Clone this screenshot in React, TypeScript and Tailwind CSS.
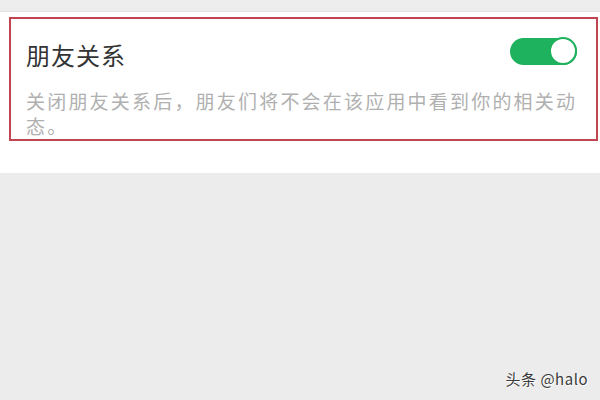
export default function App() {
  return (
    <div
      className="w-[600px] h-[400px] flex flex-col bg-[#ececec] overflow-hidden"
      style={{ fontFamily: '"Noto Sans CJK SC", "Noto Sans", sans-serif' }}
    >
      {/* top band */}
      <div className="h-[12px] bg-[#ededed] border-b border-[#e2e2e2]" />

      {/* settings card */}
      <div className="bg-white pl-[9px] pr-[2px] pt-[5px] pb-[32px]">
        <div className="border-[2px] border-[#c24552] pl-[15px] pr-[19px] pt-[22px] pb-[1px]">
          <div className="flex items-center justify-between">
            <span className="text-[24px] leading-[28px] tracking-[1px] text-[#333]">朋友关系</span>
            <div className="w-[67px] h-[27px] rounded-full bg-[#1fb25e] flex items-center justify-end -mt-[8px]">
              <div className="w-[28px] h-[28px] rounded-full bg-white border-[2px] border-[#1fb25e]" />
            </div>
          </div>
          <p className="mt-[19px] w-[558px] text-[19px] leading-[25px] tracking-[2.2px] text-[#b0b0b0]">
            关闭朋友关系后，朋友们将不会在该应用中看到你的相关动态。
          </p>
        </div>
      </div>

      {/* empty area + watermark */}
      <div className="flex-1 flex items-end justify-end pr-[12px] pb-[10px]">
        <span
          className="text-[15px] tracking-[0.5px] text-[#3a3a3a]"
          style={{ textShadow: "1px 1px 0 #fff" }}
        >
          头条 @halo
        </span>
      </div>
    </div>
  );
}
